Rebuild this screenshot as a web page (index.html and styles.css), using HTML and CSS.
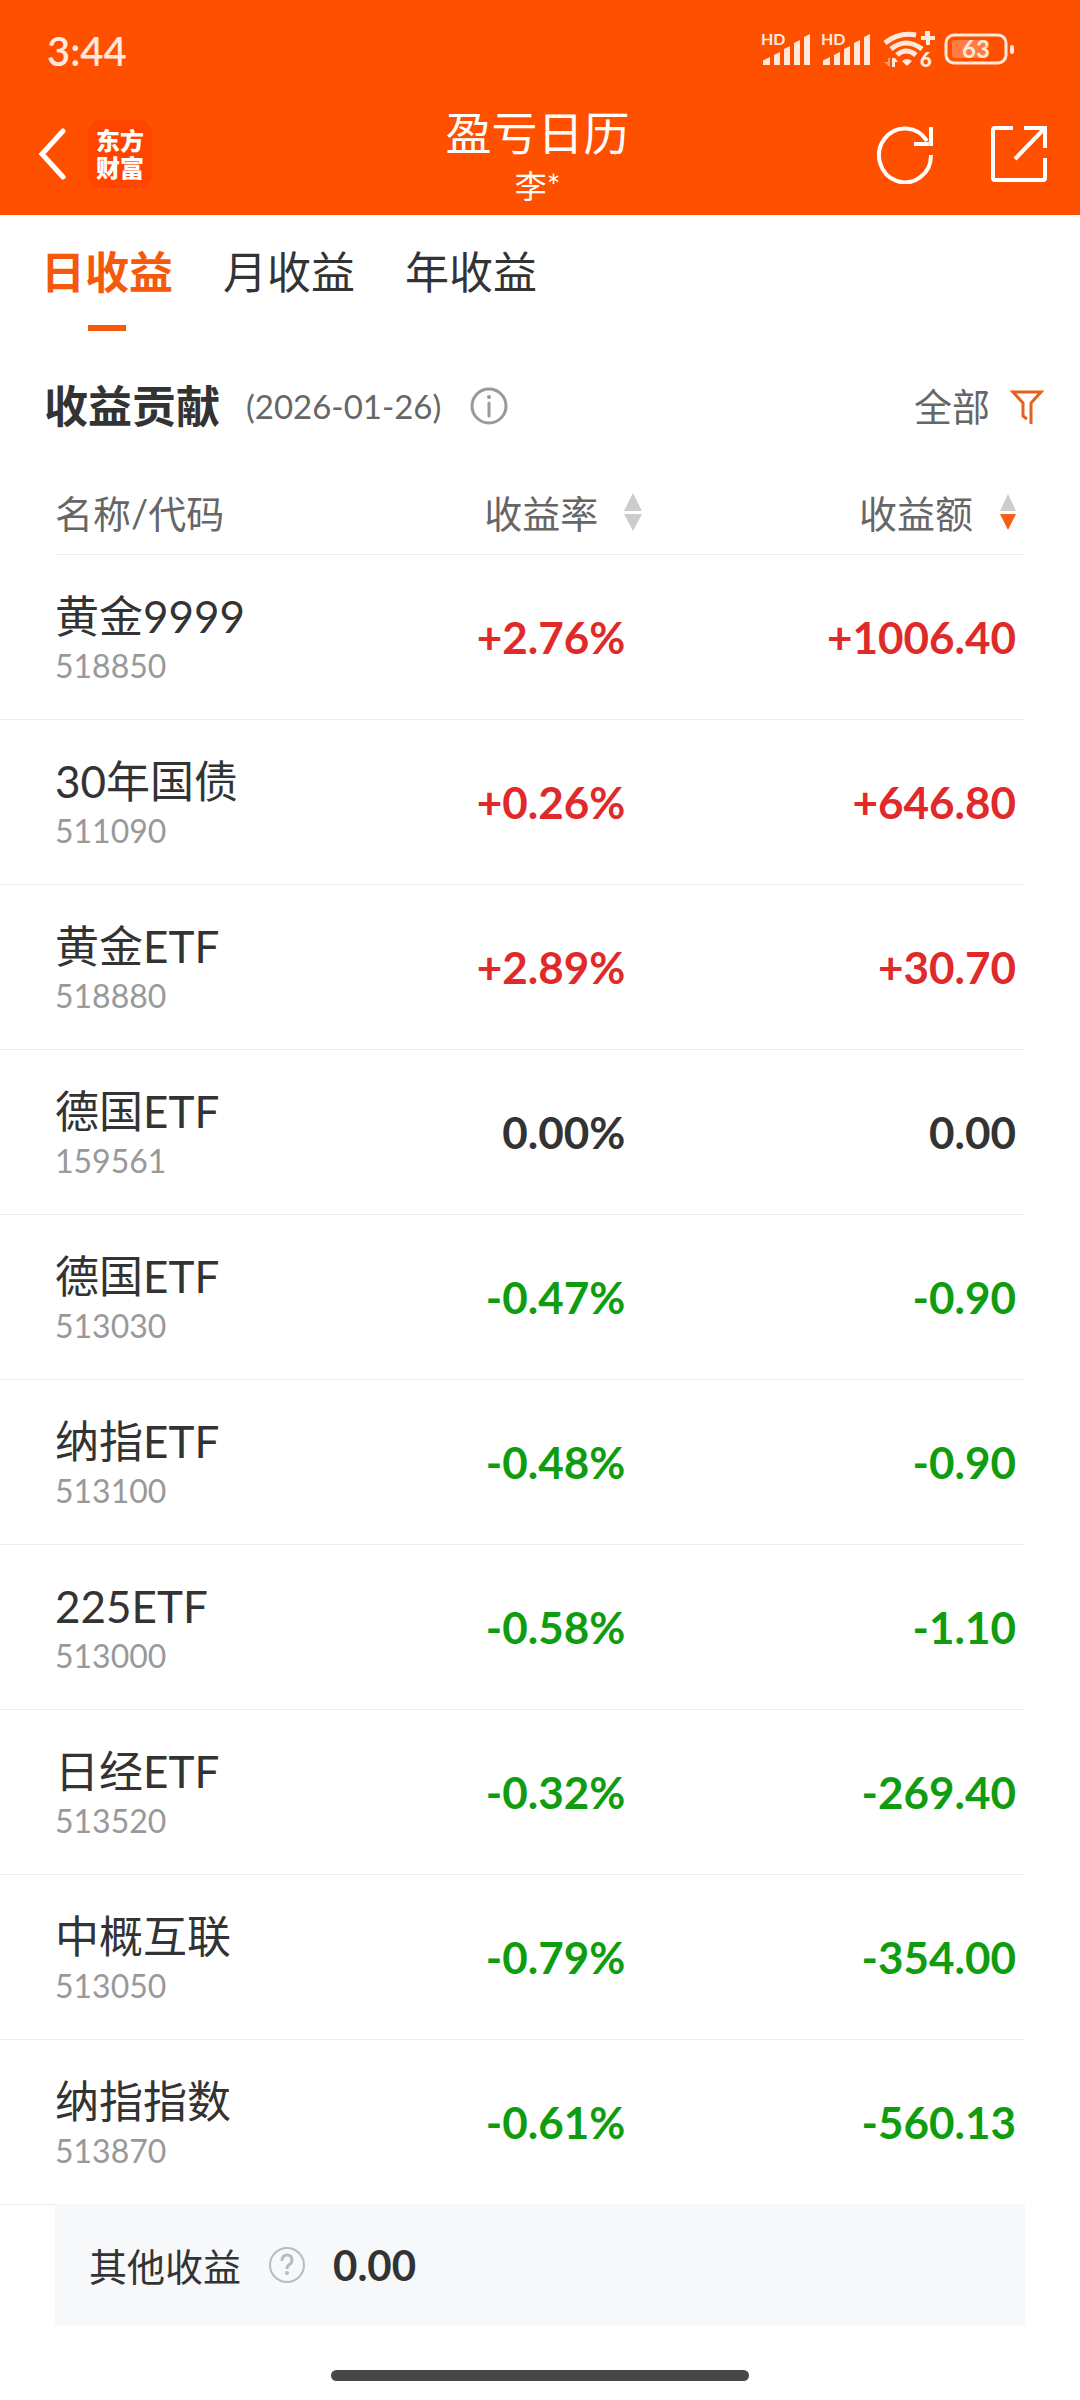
FILE: index.html
```html
<!DOCTYPE html>
<html lang="zh-CN">
<head>
<meta charset="utf-8">
<meta name="viewport" content="width=device-width, initial-scale=1">
<title>盈亏日历</title>
<link rel="stylesheet" href="styles.css">
</head>
<body>
<header class="top">
  <div class="status">
    <span class="clock">3:44</span>
    <svg class="status-icons" width="256" height="48" viewBox="0 -4 256 48" fill="#ffe9dd" role="img" aria-label="信号、无线网络与电量">
      <g id="signal">
        <text class="hd" x="0" y="14">HD</text>
        <path d="M2 34v-4q0-1 1-1l6-3v8zM13 34v-10l6-3v13zM23 34v-16l6-3v19zM33 34v-22l6-3v25zM43 34v-28l6-3v31z"/>
      </g>
      <use href="#signal" x="60"/>
      <g fill="none" stroke="#ffe9dd" stroke-width="5">
        <path d="M124 12q14-11 31-8"/>
        <path d="M130 18q15-12 31 0"/>
        <path d="M136 24q9-8 19 0"/>
      </g>
      <path d="M141 30q5-4 10 0l-5 5zM164 0h5v5h5v4h-5v5h-4v-5h-5v-4h4z"/>
      <path d="M131 27h3l3 4h-3v5h-3z"/>
      <path class="dim" d="M129 27h-2v4h-4l6 5z"/>
      <text class="wifi-gen" x="159" y="36">6</text>
      <rect x="185" y="4" width="60" height="28" rx="8" fill="none" stroke="#ffe9dd" stroke-width="3"/>
      <rect class="charge" x="191" y="9" width="34" height="18" rx="3"/>
      <rect x="249" y="14" width="4" height="9" rx="2"/>
      <text class="level" x="215" y="27">63</text>
    </svg>
  </div>
  <div class="navbar">
    <div class="nav-side">
      <button class="icon-btn" aria-label="返回">
        <svg width="28" height="52" viewBox="0 0 28 52" fill="none" stroke="#fff" stroke-width="5" stroke-linecap="round"><path d="M25 3L4 26l21 23"/></svg>
      </button>
      <span class="logo">东方<br>财富</span>
    </div>
    <div class="nav-title">
      <h1>盈亏日历</h1>
      <p>李*</p>
    </div>
    <div class="nav-side nav-actions">
      <button class="icon-btn" aria-label="刷新">
        <svg width="58" height="60" viewBox="0 0 58 60" fill="none" stroke="#fff" stroke-width="4"><path d="M54 31A26 27 0 1 1 50 17M54 3v17H37"/></svg>
      </button>
      <button class="icon-btn" aria-label="分享">
        <svg width="58" height="60" viewBox="0 0 58 60" fill="none" stroke="#fff" stroke-width="4"><path d="M24 4H6q-2 0-2 2v48q0 2 2 2h48q2 0 2-2V34M35 4h21v20M55 5L26 35"/></svg>
      </button>
    </div>
  </div>
</header>

<nav class="tabs">
  <button class="tab active">日收益</button>
  <button class="tab">月收益</button>
  <button class="tab">年收益</button>
</nav>

<main>
  <div class="section-head">
    <h2>收益贡献</h2>
    <span class="date">(2026-01-26)</span>
    <button class="icon-btn" aria-label="说明">
      <svg width="40" height="40" viewBox="0 0 40 40" fill="none" stroke="#999" stroke-width="3"><circle cx="20" cy="20" r="17"/><path d="M20 17v13" stroke-linecap="round"/><circle cx="20" cy="11" r="2" fill="#999" stroke="none"/></svg>
    </button>
    <button class="filter"><span>全部</span>
      <svg width="34" height="36" viewBox="0 0 34 36" fill="none" stroke="#e8611c" stroke-width="3"><path d="M21 36V15L31 4H3l10 11v13l4 3"/></svg>
    </button>
  </div>

  <table class="profit">
    <thead>
      <tr>
        <th scope="col">名称/代码</th>
        <th scope="col"><button class="sort">收益率<svg width="18" height="38" viewBox="0 0 18 38" fill="#ccc"><path d="M9 0l9 18H0zM9 38l9-17H0z"/></svg></button></th>
        <th scope="col"><button class="sort">收益额<svg width="18" height="38" viewBox="0 0 18 38" fill="#ccc"><path d="M9 1l8 17H1z"/><path d="M9 37l8-16H1z" fill="#f65f14"/></svg></button></th>
      </tr>
    </thead>
    <tbody>
      <tr class="up"><td><b>黄金9999</b><small>518850</small></td><td>+2.76%</td><td>+1006.40</td></tr>
      <tr class="up"><td><b>30年国债</b><small>511090</small></td><td>+0.26%</td><td>+646.80</td></tr>
      <tr class="up"><td><b>黄金ETF</b><small>518880</small></td><td>+2.89%</td><td>+30.70</td></tr>
      <tr><td><b>德国ETF</b><small>159561</small></td><td>0.00%</td><td>0.00</td></tr>
      <tr class="down"><td><b>德国ETF</b><small>513030</small></td><td>-0.47%</td><td>-0.90</td></tr>
      <tr class="down"><td><b>纳指ETF</b><small>513100</small></td><td>-0.48%</td><td>-0.90</td></tr>
      <tr class="down"><td><b>225ETF</b><small>513000</small></td><td>-0.58%</td><td>-1.10</td></tr>
      <tr class="down"><td><b>日经ETF</b><small>513520</small></td><td>-0.32%</td><td>-269.40</td></tr>
      <tr class="down"><td><b>中概互联</b><small>513050</small></td><td>-0.79%</td><td>-354.00</td></tr>
      <tr class="down"><td><b>纳指指数</b><small>513870</small></td><td>-0.61%</td><td>-560.13</td></tr>
    </tbody>
  </table>

  <div class="other">
    <span>其他收益</span>
    <button class="icon-btn" aria-label="其他收益说明">
      <svg width="36" height="38" viewBox="0 0 36 38" fill="none" stroke="#b9bbc2" stroke-width="2"><circle cx="18" cy="19" r="17"/><path d="M13 15q0-6 5-6t5 5q0 3-3 5-2 1-2 4" stroke-width="3"/><circle cx="18" cy="27" r="2" fill="#b9bbc2" stroke="none"/></svg>
    </button>
    <strong>0.00</strong>
  </div>
</main>
<div class="home-bar"></div>
</body>
</html>
```
FILE: styles.css
```css
* { box-sizing: border-box; }
body {
  margin: 0;
  background: #fff;
  color: #333;
  font-family: Lato, "Noto Sans CJK SC", sans-serif;
}
h1, h2, p { margin: 0; font-weight: 400; }
button {
  margin: 0;
  padding: 0;
  border: 0;
  background: none;
  color: inherit;
  font: inherit;
  cursor: pointer;
}
svg { display: block; flex: none; }

.top { background: #ff5000; color: #fff; }
.status {
  display: flex;
  align-items: center;
  justify-content: space-between;
  height: 102px;
  padding: 0 63px 0 47px;
}
.status-icons { overflow: visible; }
.clock { font-size: 40px; font-weight: 600; color: #ffe9dd; }
.hd { font-size: 16px; font-weight: 700; }
.wifi-gen { font-size: 20px; font-weight: 800; }
.level { font-size: 24px; font-weight: 700; text-anchor: middle; }
.dim { opacity: .5; }
.charge { opacity: .3; }

.navbar {
  display: grid;
  grid-template-columns: 1fr auto 1fr;
  height: 113px;
  padding: 0 33px 0 38px;
}
.nav-side { display: flex; align-items: center; gap: 22px; height: 104px; }
.nav-actions { justify-content: flex-end; gap: 54px; }
.logo {
  padding: 7px 8px;
  border-radius: 14px;
  background: #ff4400;
  font-size: 24px;
  font-weight: 900;
  line-height: 27px;
}
.nav-title { padding-right: 10px; text-align: center; }
.nav-title h1 { font-size: 46px; line-height: 62px; }
.nav-title p { font-size: 32px; line-height: 44px; }

.tabs { display: flex; gap: 50px; padding: 26px 41px 0; }
.tab {
  display: flex;
  flex-direction: column;
  align-items: center;
  gap: 22px;
  font-size: 44px;
  line-height: 62px;
}
.tab.active { color: #f4590c; font-weight: 700; }
.tab.active::after { content: ""; width: 38px; height: 6px; background: #f4590c; }

.section-head {
  display: flex;
  align-items: center;
  height: 64px;
  margin-top: 43px;
  padding: 0 36px 0 44px;
}
.section-head h2 { padding-bottom: 4px; font-size: 44px; font-weight: 700; }
.date { margin: 0 28px 0 26px; font-size: 33px; color: #666; }
.filter {
  display: flex;
  align-items: center;
  gap: 20px;
  margin-left: auto;
  font-size: 38px;
  color: #666;
}
.filter span { padding-bottom: 4px; }

.profit {
  width: 100%;
  padding-right: 55px;
  border-spacing: 0;
  table-layout: fixed;
}
.profit th, .profit td { padding: 0; text-align: right; }
.profit th:first-child, .profit td:first-child { width: 38%; padding-left: 55px; text-align: left; }
.profit th:nth-child(2), .profit td:nth-child(2) { width: 23%; }
.profit th {
  height: 117px;
  padding-top: 30px;
  font-size: 38px;
  font-weight: 400;
  color: #666;
  background: linear-gradient(#ededed, #ededed) no-repeat bottom / 100% 1px;
}
.profit th:first-child { background-position: 55px bottom; }
.profit th:last-child { padding-right: 8px; }
.sort { display: inline-flex; align-items: center; gap: 26px; }
.profit th:nth-child(2) .sort { margin-right: -17px; }
.profit td {
  height: 165px;
  border-bottom: 1px solid #ededed;
  font-size: 44px;
  font-weight: 700;
}
.profit td:first-child { padding-top: 2px; }
.profit td:last-child { padding-right: 9px; }
.profit b { display: block; font-size: 44px; font-weight: 400; line-height: 56px; }
.profit small { display: block; font-size: 32px; font-weight: 400; line-height: 44px; color: #999; }
.up { color: #e02a2a; }
.down { color: #0f9d0f; }
.up b, .down b { color: #333; }

.other {
  display: flex;
  align-items: center;
  gap: 28px;
  height: 121px;
  margin: -1px 55px 0;
  padding: 0 34px;
  background: #f7f8fa;
  font-size: 38px;
}
.other strong { font-size: 42px; font-weight: 700; }
.home-bar {
  width: 418px;
  max-width: 60%;
  height: 11px;
  margin: 45px auto 19px;
  border-radius: 6px;
  background: #474747;
}
```
